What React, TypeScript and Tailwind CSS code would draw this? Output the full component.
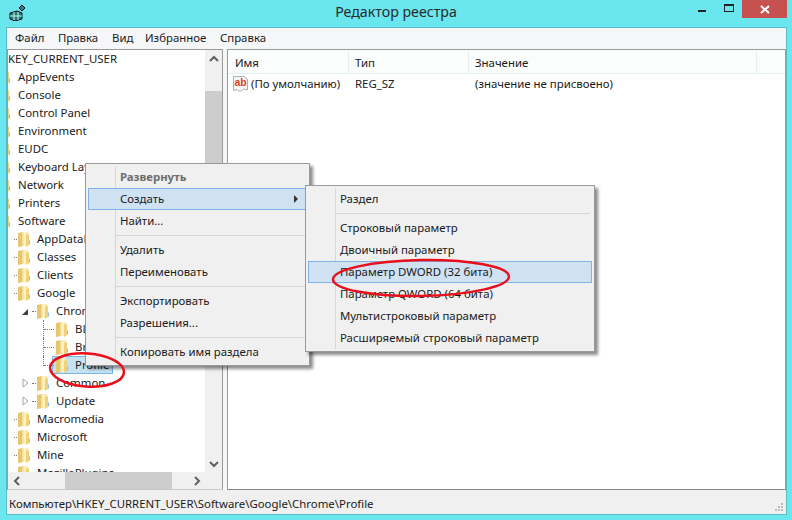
import React from "react";

const FONT = "font-['Noto_Sans',sans-serif]";

function Folder({ className = "" }: { className?: string }) {
  return (
    <svg width="14" height="17" viewBox="0 0 14 17" className={"relative shrink-0 " + className}>
      <defs>
        <linearGradient id="fg" x1="0" y1="0" x2="1" y2="0">
          <stop offset="0" stopColor="#f2d98a" />
          <stop offset="0.45" stopColor="#fdf4c8" />
          <stop offset="1" stopColor="#f7e49f" />
        </linearGradient>
      </defs>
      <path d="M1 2 L6 1 L6 15 L1 16 Z" fill="#e6c76f" />
      <path d="M5 1 H11 V15 H5 Z" fill="url(#fg)" />
      <path d="M9 4 L12 3 V14 L9 16 Z" fill="#f0d27c" />
      <path d="M12 9 V14 L13 13 V10 Z" fill="#8cc0e6" />
    </svg>
  );
}

type Row = { label: string; level: number; exp?: "open" | "closed"; sel?: boolean };

const rows: Row[] = [
  { label: "AppEvents", level: 0 },
  { label: "Console", level: 0 },
  { label: "Control Panel", level: 0 },
  { label: "Environment", level: 0 },
  { label: "EUDC", level: 0 },
  { label: "Keyboard Layout", level: 0 },
  { label: "Network", level: 0 },
  { label: "Printers", level: 0 },
  { label: "Software", level: 0 },
  { label: "AppDataLow", level: 1 },
  { label: "Classes", level: 1 },
  { label: "Clients", level: 1 },
  { label: "Google", level: 1 },
  { label: "Chrome", level: 2, exp: "open" },
  { label: "BLBeacon", level: 3 },
  { label: "Browser", level: 3 },
  { label: "Profile", level: 3, sel: true },
  { label: "Common", level: 2, exp: "closed" },
  { label: "Update", level: 2, exp: "closed" },
  { label: "Macromedia", level: 1 },
  { label: "Microsoft", level: 1 },
  { label: "Mine", level: 1 },
  { label: "MozillaPlugins", level: 1 },
];

function TreeRow({ r }: { r: Row }) {
  const pad = r.level === 0 ? "pl-0" : r.level === 1 ? "pl-[9px]" : r.level === 2 ? "pl-[28px]" : "pl-[47px]";
  const dots = r.level === 1 ? "left-[6px] w-[3px]" : r.level === 2 ? "left-[24px] w-[4px]" : "left-[36px] w-[10px]";
  return (
    <div className={"relative flex h-[18px] shrink-0 items-center whitespace-nowrap " + pad}>
      {r.sel && <span className="absolute left-[44px] top-0 h-[18px] w-[61px] border border-[#7ab8e8] bg-[#c5e2f5]" />}
      {r.level === 0 ? <Folder className="-ml-[11px] mr-[6px]" /> : <Folder className="mr-[5px]" />}
      <span className="relative pl-[1px]">{r.label}</span>
      {r.level > 0 && <span className={"absolute top-[9px] h-0 border-t border-dotted border-[#777] " + dots} />}
      {r.level === 3 && <span className={"absolute left-[35px] top-0 w-0 border-l border-dotted border-[#777] " + (r.sel ? "h-[10px]" : "h-[18px]")} />}
      {r.exp === "open" && <span className="absolute left-[14px] top-[7px] h-0 w-0 border-b-[6px] border-l-[6px] border-b-[#404040] border-l-transparent" />}
      {r.exp === "closed" && (
        <svg width="7" height="10" viewBox="0 0 7 10" className="absolute left-[14px] top-[4px]">
          <path d="M1 1 L6 5 L1 9 Z" fill="#fff" stroke="#a6a6a6" />
        </svg>
      )}
    </div>
  );
}

function Chevron({ d }: { d: string }) {
  return (
    <svg width="10" height="10" viewBox="0 0 10 10">
      <path d={d} fill="none" stroke="#606060" strokeWidth="2" />
    </svg>
  );
}

function MItem({ children, active, bold, gray, arrow }: { children: React.ReactNode; active?: boolean; bold?: boolean; gray?: boolean; arrow?: boolean }) {
  return (
    <div
      className={
        "relative flex h-[22px] items-center border pl-[31px] " +
        (active ? "border-[#7fb2e6] bg-[#d0e1f2] " : "border-transparent ") +
        (bold ? "font-bold " : "") +
        (gray ? "text-[#6d6d6d]" : "text-[#1a1a1a]")
      }
    >
      {children}
      {arrow && <span className="absolute right-[8px] top-[6px] h-0 w-0 border-y-[4px] border-l-[4px] border-y-transparent border-l-[#333]" />}
    </div>
  );
}

function Sep() {
  return <div className="my-[3px] ml-[28px] mr-[2px] h-px bg-[#d7d7d7]" />;
}

function Menu({ className, children }: { className: string; children: React.ReactNode }) {
  return (
    <div className={"absolute z-10 border border-[#9a9a9a] bg-[#f0f0f0] p-[2px] shadow-[3px_3px_3px_rgba(0,0,0,0.45)] " + className}>
      <div className="absolute bottom-[2px] left-[29px] top-[2px] w-px bg-[#d7d7d7]" />
      <div className="relative">{children}</div>
    </div>
  );
}

export default function App() {
  return (
    <div className={"relative h-[520px] w-[792px] overflow-hidden bg-[#6ae6ee] text-[11.4px] leading-none text-[#1a1a1a] " + FONT}>
      {/* title bar */}
      <div className="relative flex h-[28px] items-center justify-center pb-[3px] text-[14.2px] text-[#2a2a2a]">
        <svg width="17" height="17" viewBox="0 0 17 17" className="absolute left-[9px] top-[4px]">
          <path d="M1 9 L8 7 L13 9 L13 15 L6 17 L1 15 Z" fill="#1f7f7c" stroke="#111" strokeWidth="1" />
          <path d="M1 12 L13 12 M5 8 V16 M9 8 V16" stroke="#c9f3ee" strokeWidth="1" />
          <path d="M10 4 L13 1 L16 4 L13 7 Z" fill="#2c7f8c" stroke="#111" strokeWidth="1" />
        </svg>
        Редактор реестра
        <span className="absolute left-[698px] top-[10px] h-[2px] w-[8px] bg-[#222]" />
        <span className="absolute left-[724px] top-[4px] h-[8px] w-[10px] border border-t-2 border-[#222]" />
        <div className="absolute left-[742px] top-0 flex h-[18px] w-[45px] items-center justify-center bg-[#c75050]">
          <svg width="10" height="9" viewBox="0 0 10 9">
            <path d="M1 1 L9 8 M9 1 L1 8" stroke="#fff" strokeWidth="2" />
          </svg>
        </div>
      </div>

      {/* client */}
      <div className="ml-[7px] flex h-[486px] w-[779px] flex-col bg-[#f5f6f7] shadow-[0_0_0_1px_#5bbcc8]">
        <div className="flex h-[21px] shrink-0 items-center pb-[1px] pl-[8px]">
          <span className="w-[43px]">Файл</span>
          <span className="w-[54px]">Правка</span>
          <span className="w-[33px]">Вид</span>
          <span className="w-[75px]">Избранное</span>
          <span>Справка</span>
        </div>

        <div className="flex h-[441px] shrink-0 gap-[4px]">
          {/* tree pane */}
          <div className="flex w-[216px] shrink-0 border border-[#9a9a9a] border-b-[#c8c8c8] bg-white">
            <div className="flex min-w-0 flex-1 flex-col">
              <div className="flex min-h-0 flex-1">
                <div className="min-w-0 flex-1 overflow-hidden">
                  <div className="flex h-[18px] items-center whitespace-nowrap">KEY_CURRENT_USER</div>
                  {rows.map((r) => (
                    <TreeRow key={r.label} r={r} />
                  ))}
                </div>
                <div className="flex w-[17px] shrink-0 flex-col bg-[#f0f0f0]">
                  <div className="flex h-[17px] items-center justify-center pt-[1px]">
                    <Chevron d="M1 7 L5 3 L9 7" />
                  </div>
                  <div className="mt-[24px] h-[220px] w-full bg-[#cdcdcd]" />
                  <div className="flex-1" />
                  <div className="flex h-[17px] items-center justify-center">
                    <Chevron d="M1 3 L5 7 L9 3" />
                  </div>
                </div>
              </div>
              <div className="flex h-[17px] shrink-0 items-center bg-[#f0f0f0]">
                <div className="flex w-[17px] justify-center">
                  <Chevron d="M7 1 L3 5 L7 9" />
                </div>
                <div className="ml-[40px] h-full w-[107px] bg-[#cdcdcd]" />
                <div className="flex-1" />
                <div className="flex w-[17px] justify-center">
                  <Chevron d="M3 1 L7 5 L3 9" />
                </div>
                <div className="w-[17px]" />
              </div>
            </div>
          </div>

          {/* list pane */}
          <div className="flex min-w-0 flex-1 flex-col border border-[#9a9a9a] border-b-[#8a8a8a] bg-white">
            <div className="flex h-[24px] shrink-0 items-center border-b border-[#e5eef3] bg-[#fbfcfc]">
              <div className="h-full w-[121px] border-r border-[#e5eef3] pl-[7px] pt-[7px]">Имя</div>
              <div className="h-full w-[120px] border-r border-[#e5eef3] pl-[6px] pt-[7px]">Тип</div>
              <div className="h-full w-[288px] border-r border-[#e5eef3] pl-[6px] pt-[7px]">Значение</div>
            </div>
            <div className="flex h-[20px] items-center pl-[5px]">
              <svg width="15" height="16" viewBox="0 0 15 16" className="mr-[3px] shrink-0">
                <path d="M0.5 0.5 H11 L14.5 3 V14 L11 13 L7 15.5 L4 13.5 L0.5 14.5 Z" fill="#f8f8f8" stroke="#b0b0b0" />
                <text x="1.5" y="10" fontSize="10.5" fontWeight="700" fill="#d8431f" fontFamily="'Liberation Sans', sans-serif">ab</text>
              </svg>
              <span className="w-[104px]">(По умолчанию)</span>
              <span className="w-[120px]">REG_SZ</span>
              <span>(значение не присвоено)</span>
            </div>
          </div>
        </div>

        {/* status bar */}
        <div className="relative flex flex-1 items-center bg-[#f0f0f0] pl-[2px] pt-[3px]">
          Компьютер\HKEY_CURRENT_USER\Software\Google\Chrome\Profile
          <div className="absolute bottom-[3px] right-[3px] grid grid-cols-3 gap-px">
            <span className="h-[2px] w-[2px]" />
            <span className="h-[2px] w-[2px]" />
            <span className="h-[2px] w-[2px] bg-[#bdbdbd]" />
            <span className="h-[2px] w-[2px]" />
            <span className="h-[2px] w-[2px] bg-[#bdbdbd]" />
            <span className="h-[2px] w-[2px] bg-[#bdbdbd]" />
            <span className="h-[2px] w-[2px] bg-[#bdbdbd]" />
            <span className="h-[2px] w-[2px] bg-[#bdbdbd]" />
            <span className="h-[2px] w-[2px] bg-[#bdbdbd]" />
          </div>
        </div>
      </div>

      {/* first context menu */}
      <Menu className="left-[85px] top-[163px] w-[225px]">
        <MItem bold gray>Развернуть</MItem>
        <MItem active arrow>Создать</MItem>
        <MItem>Найти...</MItem>
        <Sep />
        <MItem>Удалить</MItem>
        <MItem>Переименовать</MItem>
        <Sep />
        <MItem>Экспортировать</MItem>
        <MItem>Разрешения...</MItem>
        <Sep />
        <MItem>Копировать имя раздела</MItem>
      </Menu>

      {/* submenu */}
      <Menu className="left-[305px] top-[185px] w-[290px]">
        <MItem>Раздел</MItem>
        <Sep />
        <MItem>Строковый параметр</MItem>
        <MItem>Двоичный параметр</MItem>
        <MItem active>Параметр DWORD (32 бита)</MItem>
        <MItem>Параметр QWORD (64 бита)</MItem>
        <MItem>Мультистроковый параметр</MItem>
        <MItem>Расширяемый строковый параметр</MItem>
      </Menu>

      {/* red annotation ellipses */}
      <svg width="792" height="520" viewBox="0 0 792 520" className="pointer-events-none absolute left-0 top-0 z-20">
        <ellipse cx="421" cy="278" rx="88" ry="18" fill="none" stroke="#e9101c" strokeWidth="2.5" transform="rotate(-1 421 278)" />
        <ellipse cx="87" cy="370" rx="37" ry="16.5" fill="none" stroke="#e9101c" strokeWidth="2.5" transform="rotate(4 87 370)" />
      </svg>
    </div>
  );
}
